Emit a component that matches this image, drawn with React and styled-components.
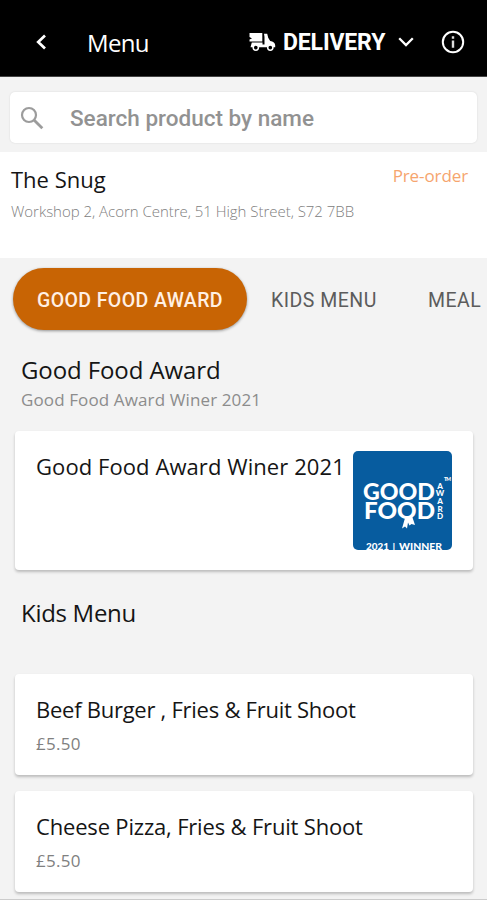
import styled, { createGlobalStyle } from 'styled-components';

const products = [
  { name: 'Beef Burger , Fries & Fruit Shoot', price: '£5.50', spacing: '-0.26px' },
  { name: 'Cheese Pizza, Fries & Fruit Shoot', price: '£5.50', spacing: '-0.18px' },
];

const ScooterIcon = () => (
  <svg width="27" height="20" viewBox="0 0 27 20" fill="none">
    <path d="M.5 1h12.8v8.500H.5v-2L3 6.500.5 5z" fill="#fff" />
    <path d="M15 1.800h3.200l1 4 2 3.200c3 .2 5 2 5 4.600v1.600h-2a3 3 0 0 0-5.800 0H9.700a3 3 0 0 0-5.800 0H1.500l1.300-4.700h10.700v2h2V5z" fill="#fff" />
    <circle cx="6.800" cy="15.600" r="2.600" stroke="#fff" strokeWidth="1.500" />
    <circle cx="21.300" cy="15.600" r="2.600" stroke="#fff" strokeWidth="1.500" />
  </svg>
);

const AwardBadge = () => (
  <svg width="99" height="99" viewBox="0 0 99 99">
    <rect width="99" height="99" rx="5" fill="#075c9f" />
    <g fill="#fff" fontFamily="Lato, sans-serif" fontWeight="900">
      <text x="10" y="48.5" fontSize="23" textLength="72" lengthAdjust="spacingAndGlyphs">GOOD</text>
      <text x="11" y="68" fontSize="23" textLength="71" lengthAdjust="spacingAndGlyphs">FOOD</text>
      <g fontSize="8" textAnchor="middle">
        <text x="87" y="37.5">A</text>
        <text x="87" y="45">W</text>
        <text x="87" y="53">A</text>
        <text x="87" y="60.5">R</text>
        <text x="87" y="68">D</text>
      </g>
      <text x="91" y="30" fontSize="5" textLength="7">TM</text>
      <g fontSize="10">
        <text x="13" y="98.5" textLength="23" lengthAdjust="spacingAndGlyphs">2021</text>
        <text x="39.5" y="98.5">|</text>
        <text x="46" y="98.5" textLength="43" lengthAdjust="spacingAndGlyphs">WINNER</text>
      </g>
    </g>
    <path d="M52 67l7-2 3 9-3.500-1-2 1.500-1.500-3-1 6-2-2-3 2z" fill="#fff" />
  </svg>
);

const App = () => (
  <>
    <GlobalStyle />
    <Screen>
      <Header>
        <BackButton aria-label="Back">
          <svg width="12" height="16" viewBox="0 0 12 16" fill="none">
            <path d="M10 1.5L3.2 8l6.8 6.5" stroke="#fff" strokeWidth="2.7" />
          </svg>
        </BackButton>
        <PageTitle>Menu</PageTitle>
        <DeliverySelect>
          <ScooterIcon />
          <span>DELIVERY</span>
          <svg width="16" height="10" viewBox="0 0 16 10" fill="none">
            <path d="M1.2 1.2L8 8l6.8-6.8" stroke="#fff" strokeWidth="2.3" />
          </svg>
        </DeliverySelect>
        <InfoButton aria-label="Info">
          <svg width="24" height="24" viewBox="0 0 24 24" fill="none">
            <circle cx="12" cy="12" r="10.2" stroke="#fff" strokeWidth="2" />
            <path d="M12 6.2v2.6M12 10.6v7.2" stroke="#ddd" strokeWidth="2.4" />
          </svg>
        </InfoButton>
      </Header>
      <SearchSection>
        <SearchField>
          <svg width="24" height="24" viewBox="0 0 24 24" fill="none">
            <circle cx="9" cy="9" r="7" stroke="#9c9c9c" strokeWidth="2.2" />
            <path d="M14 14l8.3 8.3" stroke="#9c9c9c" strokeWidth="2.8" />
          </svg>
          <span>Search product by name</span>
        </SearchField>
      </SearchSection>
      <Restaurant>
        <RestaurantRow>
          <RestaurantName>The Snug</RestaurantName>
          <PreOrder>Pre-order</PreOrder>
        </RestaurantRow>
        <Address>Workshop 2, Acorn Centre, 51 High Street, S72 7BB</Address>
      </Restaurant>
      <Tabs>
        <ActiveTab>GOOD FOOD AWARD</ActiveTab>
        <Tab $width={157}>KIDS MENU</Tab>
        <Tab $width={120}>MEAL</Tab>
      </Tabs>
      <Section $height={91}>
        <SectionTitle $spacing="-0.1px">Good Food Award</SectionTitle>
        <SectionText>Good Food Award Winer 2021</SectionText>
      </Section>
      <Card $height={139}>
        <ProductName $spacing="0.08px">Good Food Award Winer 2021</ProductName>
        <AwardBadge />
      </Card>
      <Section $height={104} $top={27}>
        <SectionTitle $spacing="-0.3px">Kids Menu</SectionTitle>
      </Section>
      <CardList>
        {products.map((product) => (
          <Card key={product.name} $height={101}>
            <div>
              <ProductName $spacing={product.spacing}>{product.name}</ProductName>
              <Price>{product.price}</Price>
            </div>
          </Card>
        ))}
      </CardList>
      <BottomLine />
    </Screen>
  </>
);

const GlobalStyle = createGlobalStyle`
  * {
    box-sizing: border-box;
  }
  body {
    margin: 0;
    background: #f3f3f3;
    font-family: 'Open Sans', sans-serif;
    color: #151515;
  }
  h1, h2, h3, p {
    margin: 0;
    font-weight: 400;
  }
  button {
    padding: 0;
    border: 0;
    background: none;
    color: inherit;
  }
  svg {
    display: block;
    flex: none;
  }
`;

const Screen = styled.main`
  display: flex;
  flex-direction: column;
  width: 487px;
  height: 900px;
  overflow: hidden;
  background: #f3f3f3;
  white-space: nowrap;
`;

const Header = styled.header`
  display: flex;
  flex: none;
  align-items: center;
  height: 77px;
  padding: 7px 22px 0 35px;
  background: #000;
  border-bottom: 1px solid #444;
  color: #fff;
`;

const BackButton = styled.button`
  width: 52px;
`;

const PageTitle = styled.h1`
  width: 162px;
  padding-top: 3px;
  font-size: 24px;
  line-height: 32px;
  letter-spacing: -0.7px;
`;

const DeliverySelect = styled.div`
  display: flex;
  align-items: center;
  width: 192px;
  font: 700 23px/28px Roboto, sans-serif;
  letter-spacing: -0.15px;
  span {
    width: 115px;
    margin: 2px 0 0 7px;
  }
`;

const InfoButton = styled.button`
  width: 24px;
`;

const SearchSection = styled.div`
  flex: none;
  height: 75px;
  padding: 15px 10px 0 10px;
`;

const SearchField = styled.div`
  display: flex;
  align-items: center;
  gap: 26px;
  height: 51px;
  padding-left: 10px;
  border-radius: 5px;
  background: #fff;
  box-shadow: 0 0 2px rgba(0, 0, 0, 0.12);
  color: #929292;
  font: 500 22.5px/30px Roboto, sans-serif;
  span {
    padding-top: 1px;
  }
`;

const Restaurant = styled.section`
  flex: none;
  height: 106px;
  padding: 11px 19px 0 11px;
  background: #fff;
`;

const RestaurantRow = styled.div`
  display: flex;
  justify-content: space-between;
`;

const RestaurantName = styled.h2`
  font-size: 22px;
  line-height: 32px;
`;

const PreOrder = styled.span`
  padding-top: 1px;
  color: #f6a56e;
  font-size: 17px;
  line-height: 24px;
  letter-spacing: -0.1px;
`;

const Address = styled.p`
  margin-top: 5px;
  color: #808080;
  font-size: 15px;
  font-weight: 300;
  line-height: 22px;
  letter-spacing: -0.03px;
`;

const Tabs = styled.nav`
  display: flex;
  flex: none;
  height: 82px;
  padding: 10px 0 0 13px;
  font: 400 19.5px/65px Roboto, sans-serif;
  letter-spacing: 0.5px;
`;

const ActiveTab = styled.div`
  flex: none;
  width: 234px;
  height: 62px;
  border-radius: 31px;
  background: #c86404;
  box-shadow: 0 1px 3px rgba(0, 0, 0, 0.4);
  color: #fff0e4;
  font-weight: 500;
  letter-spacing: 0.4px;
  text-align: center;
`;

const Tab = styled.div`
  flex: none;
  width: ${({ $width }) => $width}px;
  padding-left: 24px;
  color: #5c5c5c;
`;

const Section = styled.div`
  flex: none;
  height: ${({ $height }) => $height}px;
  padding: ${({ $top = 14 }) => $top}px 21px 0;
`;

const SectionTitle = styled.h2`
  font-size: 24px;
  line-height: 32px;
  letter-spacing: ${({ $spacing = '0' }) => $spacing};
`;

const SectionText = styled.p`
  margin-top: 1px;
  color: #8c8c8c;
  font-size: 17px;
  line-height: 26px;
  letter-spacing: 0.12px;
`;

const Card = styled.article`
  display: flex;
  flex: none;
  justify-content: space-between;
  height: ${({ $height }) => $height}px;
  margin: 0 14px 0 15px;
  padding: 20px 21px 0 21px;
  border-radius: 4px;
  background: #fff;
  box-shadow: 0 2px 3px rgba(0, 0, 0, 0.23);
`;

const ProductName = styled.h3`
  font-size: 22px;
  line-height: 31px;
  letter-spacing: ${({ $spacing = '0' }) => $spacing};
`;

const Price = styled.p`
  margin-top: 3px;
  color: #808080;
  font-size: 17px;
  line-height: 32px;
  letter-spacing: 0.3px;
`;

const CardList = styled.div`
  display: flex;
  flex: none;
  flex-direction: column;
  gap: 16px;
`;

const BottomLine = styled.div`
  flex: none;
  height: 1px;
  margin-top: 7px;
  background: #ccc;
`;

export default App;
